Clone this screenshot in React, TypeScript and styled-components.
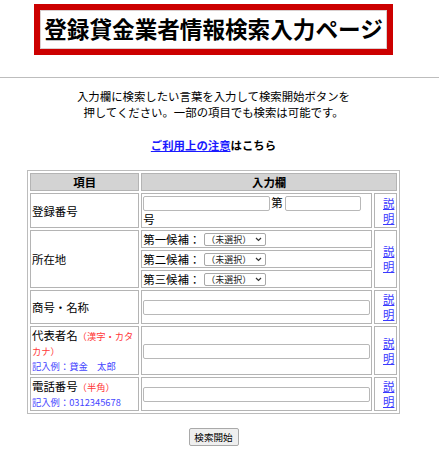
import styled, { createGlobalStyle } from "styled-components";

const GlobalStyle = createGlobalStyle`
  body {
    margin: 0;
    background: #fff;
    color: #000;
    font-family: "Noto Sans CJK JP", "Noto Sans", sans-serif;
  }
`;

const Column = styled.div`
  width: 427px;
  display: flex;
  flex-direction: column;
  align-items: center;
`;

const TitleFrame = styled.div`
  margin-top: 4px;
  width: 359px;
  box-sizing: border-box;
  border: 6px solid #cc0000;
`;

const TitleInner = styled.h1`
  margin: 0;
  height: 39px;
  box-sizing: border-box;
  border: 1px solid #d9cfcf;
  font-size: 22.6px;
  font-weight: 700;
  line-height: 36px;
  text-align: center;
  white-space: nowrap;
`;

const Rule = styled.hr`
  margin: 22px 0 0;
  border: 0;
  border-top: 1px solid #bdbdbd;
  height: 0;
`;

const Intro = styled.p`
  margin: 10px 0 0;
  font-size: 11.4px;
  line-height: 16px;
  text-align: center;
`;

const Notice = styled.p`
  margin: 17px 0 0;
  font-size: 11.4px;
  line-height: 16px;
  font-weight: 700;
  text-align: center;

  a {
    color: #1a1aff;
    text-decoration: underline;
  }
`;

const Table = styled.table`
  margin-top: 17px;
  width: 373px;
  border: 1px solid #bcbcbc;
  border-spacing: 2px;
  font-size: 11.4px;
  line-height: 14px;
`;

const HeadCell = styled.th`
  background: #d3d3d3;
  border: 1px solid #b4b4b4;
  padding: 1px;
  height: 13px;
  font-weight: 700;
  text-align: center;
`;

const Cell = styled.td<{ $w?: number; $flush?: boolean; $right?: boolean }>`
  border: ${(p) => (p.$flush ? "0" : "1px solid #b4b4b4")};
  padding: ${(p) => (p.$flush ? "0" : "1px")};
  width: ${(p) => (p.$w ? `${p.$w}px` : "auto")};
  vertical-align: middle;
  text-align: ${(p) => (p.$right ? "right" : "left")};
`;

const Field = styled.input<{ $w: number }>`
  width: ${(p) => p.$w}px;
  height: 15px;
  box-sizing: border-box;
  margin: 1px 0;
  padding: 0 2px;
  border: 1px solid #b8b8b8;
  border-radius: 2px;
  font-size: 11px;
  vertical-align: middle;
`;

const Gap = styled.span`
  margin: 0 2px 0 1px;
`;

const Candidates = styled.div`
  display: flex;
  flex-direction: column;
  gap: 2px;
`;

const Candidate = styled.div`
  border: 1px solid #b4b4b4;
  height: 16px;
  padding: 0 1px;
  display: flex;
  align-items: center;
  gap: 4px;
`;

const PickerBox = styled.span`
  display: inline-flex;
  align-items: center;
  width: 62px;
  height: 13px;
  box-sizing: border-box;
  border: 1px solid #a8a8a8;
  border-radius: 2px;
  background: #fff;
  padding-right: 3px;
`;

const Picker = styled.select`
  appearance: none;
  flex: 1;
  min-width: 0;
  height: 11px;
  padding: 0 0 0 1px;
  margin: 0;
  border: 0;
  outline: none;
  background: transparent;
  font-size: 9px;
  line-height: 11px;
  font-family: "Noto Sans CJK JP", sans-serif;
  color: #222;
`;

const Help = styled.a`
  color: #3a3aff;
  text-decoration: underline;
  display: inline-block;
  width: 12px;
  line-height: 15px;
  text-align: left;
`;

const Hint = styled.span<{ $tone: "red" | "blue" }>`
  font-size: 9.3px;
  line-height: 14px;
  color: ${(p) => (p.$tone === "red" ? "#ff3838" : "#4646ff")};
`;

const Submit = styled.button`
  margin-top: 14px;
  width: 50px;
  height: 18px;
  padding: 0;
  border: 1px solid #a9a9a9;
  border-radius: 2px;
  background: #efefef;
  font-size: 9.6px;
  line-height: 16px;
  font-family: "Noto Sans CJK JP", sans-serif;
  color: #000;
`;

const prefOptions = ["（未選択）"];

function Chevron() {
  return (
    <svg width="7" height="5" viewBox="0 0 7 5" aria-hidden="true">
      <path d="M1 1l2.5 2.5L6 1" fill="none" stroke="#333" strokeWidth="1.2" />
    </svg>
  );
}

function HelpLink() {
  return (
    <Cell $w={19} $right>
      <Help href="#">説明</Help>
    </Cell>
  );
}

export default function App() {
  return (
    <>
      <GlobalStyle />
      <Column>
        <TitleFrame>
          <TitleInner>登録貸金業者情報検索入力ページ</TitleInner>
        </TitleFrame>
      </Column>
      <Rule />
      <Column>
        <Intro>
          入力欄に検索したい言葉を入力して検索開始ボタンを
          <br />
          押してください。一部の項目でも検索は可能です。
        </Intro>
        <Notice>
          <a href="#">ご利用上の注意</a>はこちら
        </Notice>
        <Table>
          <tbody>
            <tr>
              <HeadCell>項目</HeadCell>
              <HeadCell colSpan={2}>入力欄</HeadCell>
            </tr>
            <tr>
              <Cell $w={108}>登録番号</Cell>
              <Cell>
                <Field $w={127} />
                <Gap>第</Gap>
                <Field $w={76} />
                <br />号
              </Cell>
              <HelpLink />
            </tr>
            <tr>
              <Cell $w={108}>所在地</Cell>
              <Cell $flush>
                <Candidates>
                  {["第一候補：", "第二候補：", "第三候補："].map((label) => (
                    <Candidate key={label}>
                      {label}
                      <PickerBox>
                        <Picker defaultValue={prefOptions[0]}>
                          {prefOptions.map((o) => (
                            <option key={o}>{o}</option>
                          ))}
                        </Picker>
                        <Chevron />
                      </PickerBox>
                    </Candidate>
                  ))}
                </Candidates>
              </Cell>
              <HelpLink />
            </tr>
            <tr>
              <Cell $w={108}>商号・名称</Cell>
              <Cell>
                <Field $w={227} />
              </Cell>
              <HelpLink />
            </tr>
            <tr>
              <Cell $w={108}>
                代表者名<Hint $tone="red">（漢字・カタカナ）</Hint>
                <br />
                <Hint $tone="blue">記入例：貸金　太郎</Hint>
              </Cell>
              <Cell>
                <Field $w={227} />
              </Cell>
              <HelpLink />
            </tr>
            <tr>
              <Cell $w={108}>
                電話番号<Hint $tone="red">（半角）</Hint>
                <br />
                <Hint $tone="blue">記入例：0312345678</Hint>
              </Cell>
              <Cell>
                <Field $w={227} />
              </Cell>
              <HelpLink />
            </tr>
          </tbody>
        </Table>
        <Submit type="button">検索開始</Submit>
      </Column>
    </>
  );
}
